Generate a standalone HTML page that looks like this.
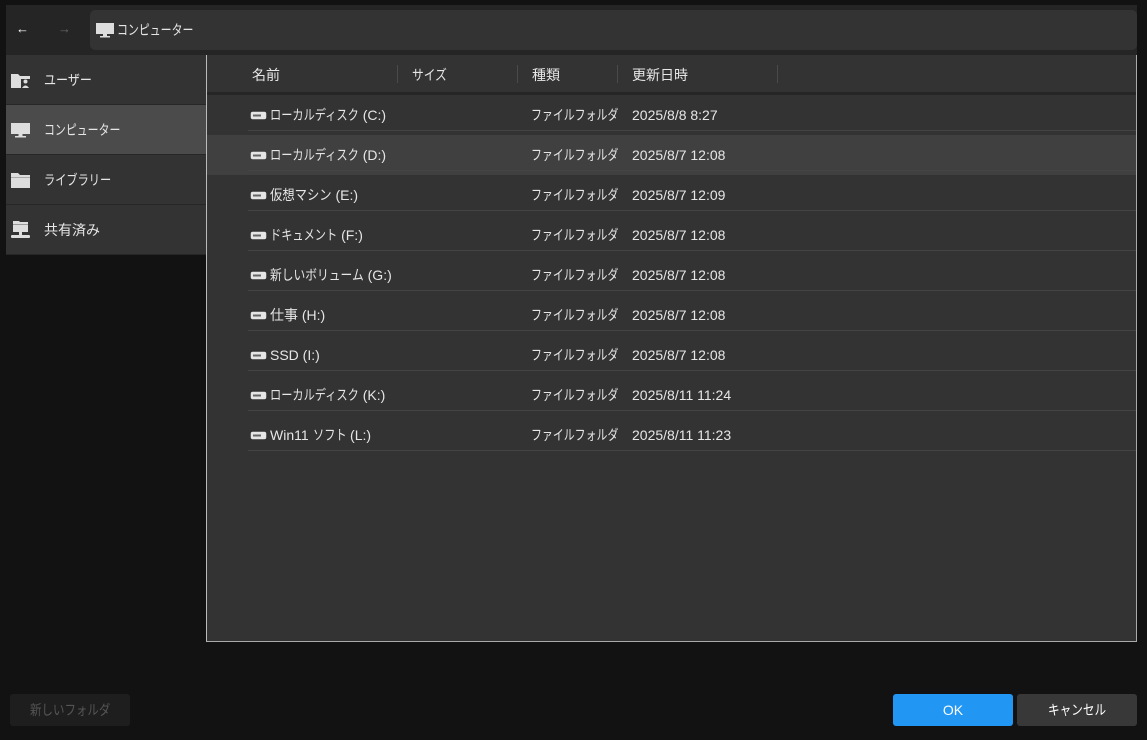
<!DOCTYPE html>
<html><head><meta charset="utf-8"><style>
*{margin:0;padding:0;box-sizing:border-box}
body{width:1147px;height:740px;background:#121212;font-family:"Liberation Sans","Noto Sans CJK JP",sans-serif;color:#e6e6e6;font-size:14px;position:relative;overflow:hidden}
.k{display:inline-block;transform-origin:0 50%;white-space:nowrap}
.top{position:absolute;left:6px;top:5px;width:1131px;height:50px;background:#252525}
.addr{position:absolute;left:84px;top:5px;width:1047px;height:40px;background:#333;border-radius:5px;display:flex;align-items:center;padding-left:6px;font-size:14px}
.side{position:absolute;left:6px;top:55px;width:200px;height:200px;background:#333}
.si{height:50px;display:flex;align-items:center;border-bottom:1px solid #272727;font-size:14px}
.si.sel{background:#4b4b4b}
.si svg{margin-left:5px;margin-right:14px}
.main{position:absolute;left:206px;top:55px;width:931px;height:587px;background:#333;border-left:1px solid #bbb;border-right:1px solid #aaa;border-bottom:1px solid #aaa}
.hdr{height:40px;position:relative;border-bottom:3px solid #262626;font-size:14px}
.hdr span{position:absolute;top:10px}
.hdr i{position:absolute;top:10px;width:1px;height:18px;background:#4a4a4a}
.row{height:40px;position:relative;font-size:14px}
.row.hov{background:#404040}
.row .ln{position:absolute;left:41px;right:0;bottom:4px;height:1px;background:#444}
.row>span{position:absolute;top:0;height:40px;display:flex;align-items:center;white-space:nowrap}
.row svg{margin-right:3px}
.btn{position:absolute;top:694px;height:32px;border-radius:3px;display:flex;align-items:center;justify-content:center;font-size:14px}
</style></head><body>
<div class="top">
 <div style="position:absolute;left:10px;top:16px;color:#fff;font-size:13px;font-weight:bold">&#8592;</div>
 <div style="position:absolute;left:52px;top:16px;color:#666;font-size:13px">&#8594;</div>
 <div class="addr"><svg width="18" height="16" viewBox="0 0 18 16"><rect x="0" y="1" width="18" height="11" fill="#ddd"/><rect x="7" y="12" width="4" height="2" fill="#ddd"/><rect x="4" y="14" width="10" height="1.5" fill="#ddd"/></svg><span class="k" style="margin-left:3px">コンピューター</span></div>
</div>
<div class="side">
 <div class="si"><svg width="19" height="16" viewBox="0 0 19 16"><path d="M0 2h7l2 2h10v12H0z" fill="#ddd"/><rect x="10" y="7" width="9" height="9" fill="#333"/><circle cx="14.5" cy="9.5" r="2" fill="#ddd"/><path d="M11 16q3.5-5 7 0z" fill="#ddd"/></svg><span class="k" data-s=".86">ユーザー</span></div>
 <div class="si sel"><svg width="19" height="16" viewBox="0 0 19 16"><rect x="0" y="1" width="19" height="11" fill="#ddd"/><rect x="7.5" y="12" width="4" height="2" fill="#ddd"/><rect x="4" y="14" width="11" height="1.5" fill="#ddd"/></svg><span class="k">コンピューター</span></div>
 <div class="si"><svg width="19" height="16" viewBox="0 0 19 16"><path d="M0 1h7l2 2h10v13H0z" fill="#ddd"/><rect x="0" y="5" width="19" height="1" fill="#aaa"/></svg><span class="k" data-s=".8">ライブラリー</span></div>
 <div class="si"><svg width="19" height="18" viewBox="0 0 19 18"><path d="M2 0h6l1 1h8v10H2z" fill="#ddd"/><rect x="2" y="3" width="15" height="1" fill="#999"/><rect x="8" y="11" width="3" height="3" fill="#ddd"/><rect x="0" y="14" width="19" height="3" rx="1" fill="#ddd"/></svg>共有済み</div>
</div>
<div class="main">
 <div class="hdr">
  <span style="left:45px">名前</span><i style="left:190px"></i>
  <span style="left:205px" class="k" data-s=".84">サイズ</span><i style="left:310px"></i>
  <span style="left:325px">種類</span><i style="left:410px"></i>
  <span style="left:425px">更新日時</span><i style="left:570px"></i>
 </div>
</div>
<div class="btn" style="left:10px;width:120px;background:#1e1e1e;color:#555"><span class="k" data-s=".82">新しいフォルダ</span></div>
<div class="btn" style="left:893px;width:120px;background:#2196f3;color:#fff">OK</div>
<div class="btn" style="left:1017px;width:120px;background:#383838;color:#fff"><span class="k" data-s=".83">キャンセル</span></div>
<div id="r" style="position:absolute;left:207px;top:95px;width:929px"></div>
<script>
var rows=[["<span class='k' data-s='.8'>ローカルディスク</span>&nbsp;(C:)","2025/8/8 8:27"],["<span class='k' data-s='.8'>ローカルディスク</span>&nbsp;(D:)","2025/8/7 12:08"],["<span class='k' data-s='.88'>仮想マシン</span>&nbsp;(E:)","2025/8/7 12:09"],["<span class='k' data-s='.8'>ドキュメント</span>&nbsp;(F:)","2025/8/7 12:08"],["<span class='k' data-s='.84'>新しいボリューム</span>&nbsp;(G:)","2025/8/7 12:08"],["仕事&nbsp;(H:)","2025/8/7 12:08"],["SSD&nbsp;(I:)","2025/8/7 12:08"],["<span class='k' data-s='.8'>ローカルディスク</span>&nbsp;(K:)","2025/8/11 11:24"],["Win11&nbsp;<span class='k' data-s='.8'>ソフト</span>&nbsp;(L:)","2025/8/11 11:23"]];
var ic='<svg width="17" height="9" viewBox="0 0 17 9"><rect x="0.75" y="0.75" width="15.5" height="7.5" rx="2" fill="#e6e6e6"/><rect x="3" y="3.5" width="8" height="2" fill="#666"/></svg>';
var h='';rows.forEach(function(r,i){h+='<div class="row'+(i==1?' hov':'')+'"><span style="left:43px">'+ic+r[0]+'</span><span style="left:324px"><span class="k">ファイルフォルダ</span></span><span style="left:425px">'+r[1]+'</span><div class="ln"></div></div>';});
document.getElementById('r').innerHTML=h;
document.querySelectorAll('.k').forEach(function(e){var s=parseFloat(e.getAttribute('data-s')||'.78');var w=e.getBoundingClientRect().width;e.style.transform='scaleX('+s+')';e.style.marginRight=(-(w*(1-s)))+'px';});
</script>
</body></html>
